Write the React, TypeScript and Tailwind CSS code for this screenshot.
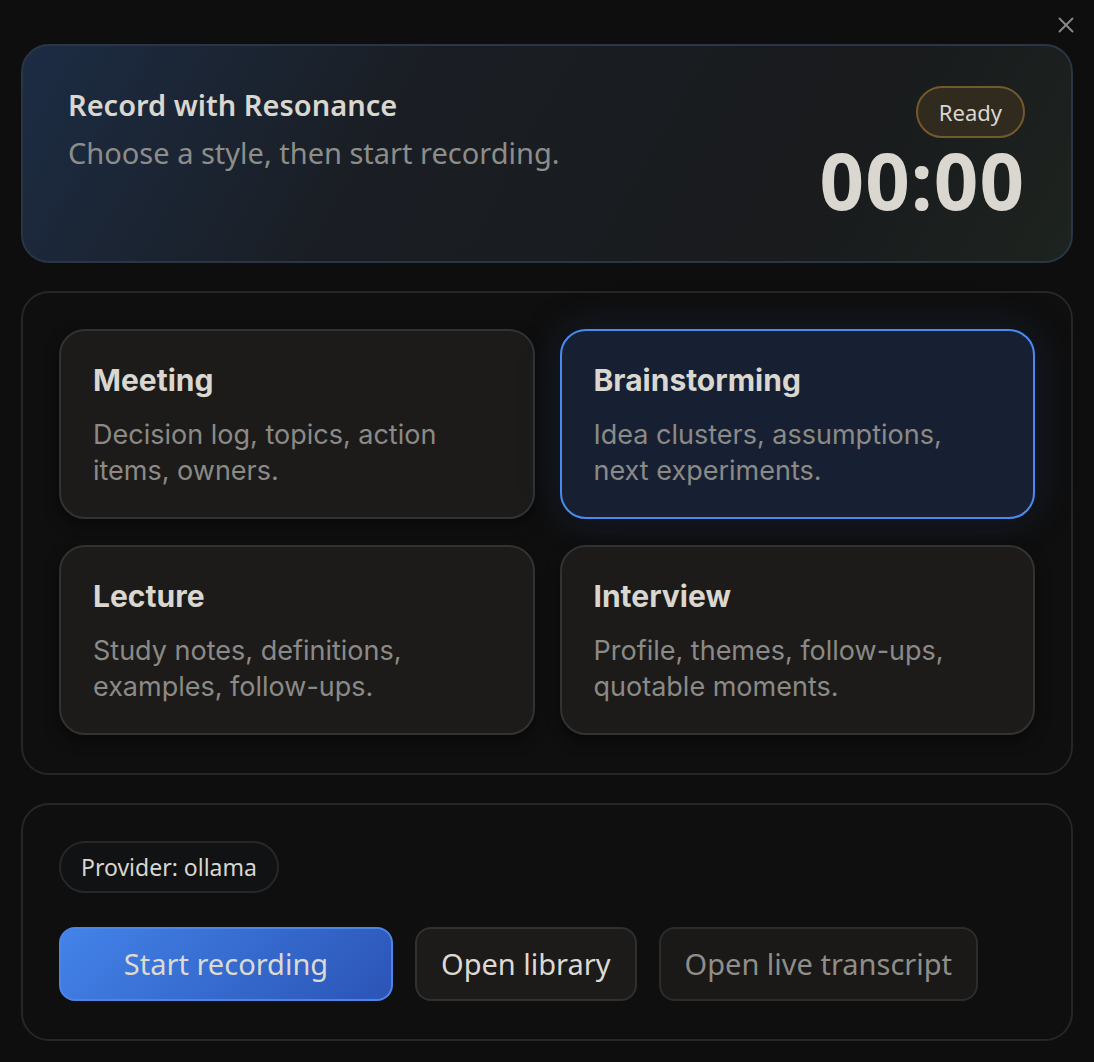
import { X } from 'lucide-react'

const styles = [
  { name: 'Meeting', desc: 'Decision log, topics, action items, owners.' },
  { name: 'Brainstorming', desc: 'Idea clusters, assumptions, next experiments.' },
  { name: 'Lecture', desc: 'Study notes, definitions, examples, follow-ups.' },
  { name: 'Interview', desc: 'Profile, themes, follow-ups, quotable moments.' },
]

export default function App() {
  const selected = 'Brainstorming'

  return (
    <div
      className="min-h-[1062px] w-full bg-[#0e0e0e] text-[#d9d7cf] px-[21px] pt-[44px] pb-[22px] relative"
      style={{ fontFamily: '"Noto Sans", Lato, sans-serif' }}
    >
      <button className="absolute right-[15px] top-[12px] text-[#8a8a88]">
        <X size={26} strokeWidth={1.7} />
      </button>

      {/* header */}
      <div className="rounded-[28px] border-2 border-[#2a3646] bg-[linear-gradient(120deg,#1c2c44_0%,#1a1e24_35%,#191b1d_75%,#1d231f_100%)] h-[219px] pl-[45px] pr-[46px] pt-[40px] flex justify-between">
        <div>
          <h1 className="text-[29px] font-semibold leading-[38px]">Record with Resonance</h1>
          <p className="text-[29px] leading-[38px] text-[#8d8d8a] mt-[10px]">Choose a style, then start recording.</p>
        </div>
        <div className="flex flex-col items-end">
          <span className="h-[52px] px-[21px] rounded-full border-2 border-[#74592c] bg-[#312a1f] flex items-center text-[22px]">
            Ready
          </span>
          <span className="text-[78px] font-bold leading-[80px] mt-[2px] tracking-[1px]">00:00</span>
        </div>
      </div>

      {/* style grid */}
      <div className="mt-[28px] rounded-[28px] border-2 border-[#262626] bg-[#0f0f0f] px-[36px] pt-[36px] pb-[38px]">
        <div className="grid grid-cols-2 gap-x-[25px] gap-y-[26px]" style={{ fontFamily: 'Inter, sans-serif' }}>
          {styles.map((s) => {
            const active = s.name === selected
            return (
              <div
                key={s.name}
                className={
                  active
                    ? 'h-[190px] rounded-[26px] border-2 border-[#4a8af0] bg-[#172033] px-[32px] pt-[30px] shadow-[0_0_40px_rgba(40,70,130,0.25)]'
                    : 'h-[190px] rounded-[26px] border-2 border-[#323232] bg-[#1c1b1a] px-[32px] pt-[30px] shadow-[0_6px_14px_rgba(0,0,0,0.5)]'
                }
              >
                <h2 className="text-[30px] font-bold leading-[38px]">{s.name}</h2>
                <p className="mt-[18px] text-[27px] leading-[36px] text-[#8b8a86] pr-[40px]">{s.desc}</p>
              </div>
            )
          })}
        </div>
      </div>

      {/* actions */}
      <div className="mt-[28px] rounded-[28px] border-2 border-[#262626] bg-[#0f0f0f] px-[36px] pt-[36px] pb-[38px] flex flex-col items-start">
        <span className="flex h-[52px] px-[20px] items-center rounded-full border-2 border-[#262728] bg-[#111213] text-[23px]">
          Provider: ollama
        </span>
        <div className="mt-[34px] flex gap-[22px]">
          <button className="h-[74px] w-[334px] rounded-[16px] border-2 border-[#4b86e6] bg-[linear-gradient(135deg,#4383e9,#2b54b6)] text-[29px] text-[#dcdad2]">
            Start recording
          </button>
          <button className="h-[74px] px-[24px] rounded-[16px] border-2 border-[#303030] bg-[#1c1b1a] text-[29px] text-[#dcdad2]">
            Open library
          </button>
          <button className="h-[74px] px-[24px] rounded-[16px] border-2 border-[#2c2c2c] bg-[#1a1918] text-[29px] text-[#8f8e89]">
            Open live transcript
          </button>
        </div>
      </div>
    </div>
  )
}
